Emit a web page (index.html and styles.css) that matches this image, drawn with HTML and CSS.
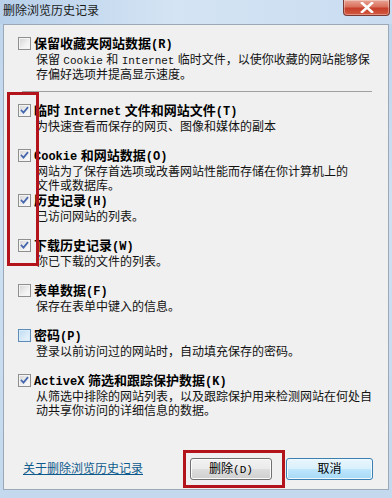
FILE: index.html
```html
<!DOCTYPE html>
<html lang="zh-CN">
<head>
<meta charset="utf-8">
<title>删除浏览历史记录</title>
<link rel="stylesheet" href="styles.css">
</head>
<body>
<div class="window">
  <div class="titlebar">
    <span class="title">删除浏览历史记录</span>
    <div class="close">
      <svg width="14" height="11" viewBox="0 0 14 11"><path d="M2 1 L12 10 M12 1 L2 10" stroke="#fff" stroke-width="2.6" stroke-linecap="square"/></svg>
    </div>
  </div>
  <div class="panel">
    <div class="options">
      <div class="item first">
        <span class="cb"></span>
        <span class="name">保留收藏夹网站数据<span class="en">(R)</span></span>
        <p class="desc">保留 <span class="en">Cookie</span> 和 <span class="en">Internet</span> 临时文件，以使你收藏的网站能够保<br>存偏好选项并提高显示速度。</p>
      </div>
      <hr class="sep">
      <div class="item">
        <span class="cb checked"><svg viewBox="0 0 13 13"><path d="M3 6.5 L5.3 9 L10 3.3"/></svg></span>
        <span class="name">临时 <span class="en">Internet</span> 文件和网站文件<span class="en">(T)</span></span>
        <p class="desc">为快速查看而保存的网页、图像和媒体的副本</p>
      </div>
      <div class="item">
        <span class="cb checked"><svg viewBox="0 0 13 13"><path d="M3 6.5 L5.3 9 L10 3.3"/></svg></span>
        <span class="name"><span class="en">Cookie</span> 和网站数据<span class="en">(O)</span></span>
        <p class="desc">网站为了保存首选项或改善网站性能而存储在你计算机上的<br>文件或数据库。</p>
      </div>
      <div class="item">
        <span class="cb checked"><svg viewBox="0 0 13 13"><path d="M3 6.5 L5.3 9 L10 3.3"/></svg></span>
        <span class="name">历史记录<span class="en">(H)</span></span>
        <p class="desc">已访问网站的列表。</p>
      </div>
      <div class="item">
        <span class="cb checked"><svg viewBox="0 0 13 13"><path d="M3 6.5 L5.3 9 L10 3.3"/></svg></span>
        <span class="name">下载历史记录<span class="en">(W)</span></span>
        <p class="desc">你已下载的文件的列表。</p>
      </div>
      <div class="item">
        <span class="cb"></span>
        <span class="name">表单数据<span class="en">(F)</span></span>
        <p class="desc">保存在表单中键入的信息。</p>
      </div>
      <div class="item">
        <span class="cb hover"></span>
        <span class="name">密码<span class="en">(P)</span></span>
        <p class="desc">登录以前访问过的网站时，自动填充保存的密码。</p>
      </div>
      <div class="item">
        <span class="cb checked"><svg viewBox="0 0 13 13"><path d="M3 6.5 L5.3 9 L10 3.3"/></svg></span>
        <span class="name"><span class="en">ActiveX</span> 筛选和跟踪保护数据<span class="en">(K)</span></span>
        <p class="desc">从筛选中排除的网站列表，以及跟踪保护用来检测网站在何处自<br>动共享你访问的详细信息的数据。</p>
      </div>
    </div>
    <div class="footer">
      <a class="link" href="#">关于删除浏览历史记录</a>
      <div class="buttons">
        <button class="btn">删除<span class="btn-en">(D)</span></button>
        <button class="btn focus">取消</button>
      </div>
    </div>
  </div>
  <div class="mark mark-checks"></div>
  <div class="mark mark-delete"></div>
</div>
</body>
</html>
```
FILE: styles.css
```css
* { box-sizing: border-box; }
html, body { margin: 0; padding: 0; }
body {
  width: 392px;
  height: 498px;
  overflow: hidden;
  font-family: "Liberation Sans", "Noto Sans CJK SC", sans-serif;
  font-size: 12px;
  color: #111;
}
.window {
  position: relative;
  width: 392px;
  height: 498px;
  display: flex;
  flex-direction: column;
  padding: 0 3px 8px 3px;
  background: linear-gradient(180deg, #bcd4ec 0%, #cfe0f2 40%, #c4d9ee 100%);
}
.titlebar {
  height: 24px;
  flex: none;
  display: flex;
  align-items: flex-start;
  justify-content: space-between;
  background: linear-gradient(90deg, #b8d0ea 0%, #d4e4f4 45%, #c9dcf0 100%);
  margin: 0 -3px;
  padding: 0 2px 0 3px;
}
.title {
  font-size: 12px;
  line-height: 22px;
  color: #1a1a1a;
}
.close {
  width: 47px;
  height: 16px;
  display: flex;
  align-items: center;
  justify-content: center;
  border: 1px solid #7a3a34;
  border-top: none;
  border-radius: 0 0 4px 4px;
  background: linear-gradient(180deg, #e8a494 0%, #d9705c 45%, #c53f2a 55%, #d35a40 100%);
  box-shadow: inset 0 0 0 1px rgba(255,255,255,0.35);
}
.close svg { display: block; }
.panel {
  flex: 1;
  display: flex;
  flex-direction: column;
  background: #f0f0f0;
  border: 1px solid #9aa8b8;
  padding: 11px 15px 9px 14px;
}
.options { display: flex; flex-direction: column; }
.item {
  display: grid;
  grid-template-columns: 13px 1fr;
  column-gap: 3px;
  height: 45px;
  align-content: start;
}
.item.first { height: auto; }
.cb {
  width: 13px;
  height: 13px;
  margin-top: 1px;
  border: 1px solid #8e8f8f;
  background: linear-gradient(135deg, #d3d3d3 0%, #f1f1f1 60%, #fbfbfb 100%);
  box-shadow: inset 0 0 0 1px #f4f4f4;
  display: block;
}
.cb svg { display: block; width: 11px; height: 11px; }
.cb svg path {
  fill: none;
  stroke: #4466ad;
  stroke-width: 2;
  stroke-linecap: square;
}
.cb.hover {
  border-color: #5f8bb8;
  background: linear-gradient(135deg, #bcdcf2 0%, #dcecf8 60%, #eaf4fb 100%);
  box-shadow: inset 0 0 0 1px #d8ecf9;
}
.name {
  font-weight: 700;
  font-size: 13px;
  line-height: 15px;
  white-space: nowrap;
  color: #000;
}
.name .en {
  font-family: "Liberation Mono", monospace;
  font-size: 12px;
  font-weight: 700;
}
.desc {
  grid-column: 2;
  margin: 0 0 0 2px;
  font-size: 12px;
  line-height: 14px;
  white-space: nowrap;
  color: #111;
}
.desc .en {
  font-family: "Liberation Mono", monospace;
  font-size: 11px;
  letter-spacing: 0;
}
.sep {
  border: none;
  border-top: 1px solid #a0a0a0;
  margin: 9px 0 11px 4px;
  width: 350px;
  height: 0;
}
.footer {
  margin-top: auto;
  display: flex;
  align-items: center;
  justify-content: space-between;
  padding-left: 5px;
}
.link {
  color: #0d5a8c;
  text-decoration: underline;
  font-size: 12px;
  line-height: 16px;
}
.buttons { display: flex; gap: 14px; }
.btn {
  height: 22px;
  padding: 0;
  font-family: "Liberation Sans", "Noto Sans CJK SC", sans-serif;
  font-size: 12px;
  line-height: 18px;
  color: #000;
  border: 1px solid #707070;
  border-radius: 3px;
  background: linear-gradient(180deg, #f2f2f2 0%, #ebebeb 48%, #dddddd 52%, #cfcfcf 100%);
  box-shadow: inset 0 0 0 1px #fcfcfc;
  width: 82px;
}
.btn-en { font-family: "Liberation Mono", monospace; font-size: 11px; }
.btn.focus {
  width: 87px;
  border-color: #3c7fb1;
  background: linear-gradient(180deg, #eaf6fd 0%, #d9f0fc 48%, #bee6fd 52%, #a7d9f5 100%);
  box-shadow: inset 0 0 0 1px #f0fafe;
}
.mark {
  position: absolute;
  border: 3px solid #b3141c;
  pointer-events: none;
}
.mark-checks { left: 7px; top: 92px; width: 32px; height: 174px; }
.mark-delete { left: 183px; top: 450px; width: 102px; height: 38px; }
```
